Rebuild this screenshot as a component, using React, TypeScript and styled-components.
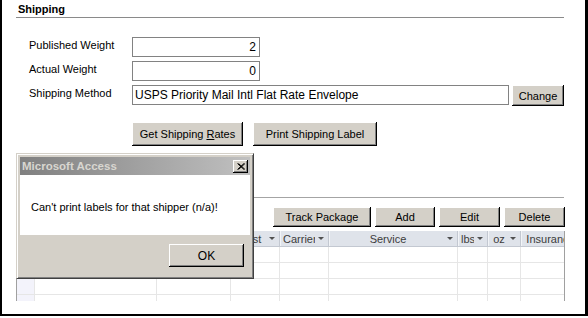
import React from 'react';
import styled, { createGlobalStyle } from 'styled-components';

const GlobalStyle = createGlobalStyle`
  html, body {
    margin: 0;
    padding: 0;
    background: #ffffff;
  }
  body {
    font-family: 'Liberation Sans', Arial, sans-serif;
    color: #000;
  }
`;

const Frame = styled.div`
  position: relative;
  width: 588px;
  height: 316px;
  box-sizing: border-box;
  border-left: 2px solid #000;
  border-right: 3px solid #000;
  border-bottom: 2px solid #000;
  background: #fff;
  overflow: hidden;
  padding-left: 14px;
  display: flex;
  flex-direction: column;
`;

const SectionHeader = styled.div`
  width: 548px;
  height: 18px;
  border-bottom: 1px solid #8a8a8a;
  padding: 3px 0 0 2px;
  box-sizing: border-box;
  font-size: 11px;
  font-weight: bold;
  line-height: 13px;
`;

const Fields = styled.div`
  margin-top: 19px;
  display: flex;
  flex-direction: column;
  gap: 4px;
`;

const FieldRow = styled.div`
  display: flex;
  align-items: flex-start;
`;

const Label = styled.div`
  width: 103px;
  margin-left: 13px;
  padding-top: 2px;
  font-size: 11px;
  line-height: 13px;
  color: #000;
`;

const TextBox = styled.div<{ $w: number; $right?: boolean }>`
  width: ${(p) => p.$w}px;
  height: 20px;
  box-sizing: border-box;
  border: 1px solid #828282;
  background: #fff;
  font-size: 12px;
  line-height: 18px;
  padding: 0 3px 0 2px;
  text-align: ${(p) => (p.$right ? 'right' : 'left')};
  white-space: nowrap;
  overflow: hidden;
`;

const Button = styled.div<{ $w: number; $h: number }>`
  width: ${(p) => p.$w}px;
  height: ${(p) => p.$h}px;
  box-sizing: border-box;
  background: #d4d0c8;
  box-shadow: inset -1px -1px #000, inset 1px 1px #fff, inset -2px -2px #808080;
  font-size: 11px;
  color: #000;
  display: flex;
  align-items: center;
  justify-content: center;
  white-space: nowrap;
  flex: none;
`;

const ChangeButton = styled(Button)`
  margin-left: 3px;
`;

const RateButtons = styled.div`
  margin: 16px 0 0 116px;
  display: flex;
  gap: 10px;
`;

const Divider = styled.div`
  margin-top: 51px;
  width: 548px;
  height: 1px;
  background: #a4a4a4;
`;

const ActionBar = styled.div`
  margin-top: 9px;
  width: 549px;
  display: flex;
  justify-content: flex-end;
  gap: 4px;
`;

const Sheet = styled.div`
  margin-top: 4px;
  width: 549px;
  height: 70px;
  box-sizing: border-box;
  border-left: 1px solid #a0a0a0;
  border-right: 1px solid #a0a0a0;
  overflow: hidden;
`;

const columns = '18px 122px 74px 49px 49px 129px 30px 33px 70px';

const SheetRow = styled.div<{ $head?: boolean }>`
  display: grid;
  grid-template-columns: ${columns};
  height: 16px;
  box-sizing: border-box;
  border-bottom: 1px solid ${(p) => (p.$head ? '#c3c8d1' : '#e6e6e6')};
  background: ${(p) => (p.$head ? '#dfe3ea' : '#fff')};
`;

const HeadCell = styled.div`
  display: flex;
  align-items: center;
  padding: 0 4px 0 3px;
  border-right: 1px solid #c3c8d1;
  box-shadow: inset 1px 0 #f2f4f7;
  overflow: hidden;
  min-width: 0;
`;

const HeadText = styled.span`
  flex: 1;
  min-width: 0;
  text-align: center;
  overflow: hidden;
  white-space: nowrap;
  font-size: 11px;
  color: #3c3c3c;
`;

const Arrow = styled.span`
  flex: none;
  margin-left: 3px;
  width: 0;
  height: 0;
  border-left: 3px solid transparent;
  border-right: 3px solid transparent;
  border-top: 3px solid #505050;
`;

const Cell = styled.div<{ $selector?: boolean }>`
  border-right: 1px solid #e6e6e6;
  background: ${(p) => (p.$selector ? '#f3f3fb' : '#fff')};
`;

const Dialog = styled.div`
  position: absolute;
  left: 14px;
  top: 153px;
  width: 238px;
  height: 126px;
  box-sizing: border-box;
  background: #d4d0c8;
  border: 1px solid;
  border-color: #d4d0c8 #404040 #404040 #d4d0c8;
  box-shadow: inset 1px 1px #fff, inset -1px -1px #808080;
  padding: 3px;
  display: flex;
  flex-direction: column;
`;

const TitleBar = styled.div`
  height: 18px;
  flex: none;
  background: linear-gradient(to right, #808080, #c0c0c0);
  display: flex;
  align-items: center;
  justify-content: space-between;
  padding: 0 2px 0 2px;
  box-sizing: border-box;
`;

const TitleText = styled.span`
  font-size: 11.5px;
  font-weight: bold;
  color: #d8d6d0;
`;

const CloseBox = styled.div`
  width: 15px;
  height: 13px;
  box-sizing: border-box;
  background: #d4d0c8;
  box-shadow: inset -1px -1px #000, inset 1px 1px #fff, inset -2px -2px #808080;
  display: flex;
  align-items: center;
  justify-content: center;
`;

const Message = styled.div`
  height: 60px;
  flex: none;
  background: #fff;
  box-sizing: border-box;
  padding: 26px 0 0 11px;
  font-size: 11px;
  line-height: 13px;
  color: #000;
`;

const DialogFooter = styled.div`
  flex: 1;
  display: flex;
  justify-content: flex-end;
  align-items: flex-start;
  padding: 9px 6px 0 0;
`;

const OkButton = styled(Button)`
  font-size: 12px;
`;

type Col = { label: string };

const headers: Col[] = [
  { label: 'Date' },
  { label: 'Tracking' },
  { label: 'Cost' },
  { label: 'Carrier' },
  { label: 'Service' },
  { label: 'lbs' },
  { label: 'oz' },
  { label: 'Insurance' },
];

function Datasheet() {
  const rows = [0, 1, 2, 3];
  return (
    <Sheet>
      <SheetRow $head>
        <HeadCell />
        {headers.map((h) => (
          <HeadCell key={h.label}>
            <HeadText>{h.label}</HeadText>
            <Arrow />
          </HeadCell>
        ))}
      </SheetRow>
      {rows.map((r) => (
        <SheetRow key={r}>
          <Cell $selector />
          {headers.map((h) => (
            <Cell key={h.label} />
          ))}
        </SheetRow>
      ))}
    </Sheet>
  );
}

function AccessMessage() {
  return (
    <Dialog>
      <TitleBar>
        <TitleText>Microsoft Access</TitleText>
        <CloseBox>
          <svg width="8" height="7" viewBox="0 0 8 7">
            <path d="M0.5 0.5 L7 6.5 M1.5 0.5 L8 6.5 M7 0.5 L0.5 6.5 M8 0.5 L1.5 6.5" stroke="#000" strokeWidth="1" />
          </svg>
        </CloseBox>
      </TitleBar>
      <Message>Can't print labels for that shipper (n/a)!</Message>
      <DialogFooter>
        <OkButton $w={75} $h={23}>OK</OkButton>
      </DialogFooter>
    </Dialog>
  );
}

export default function App() {
  return (
    <>
      <GlobalStyle />
      <Frame>
        <SectionHeader>Shipping</SectionHeader>
        <Fields>
          <FieldRow>
            <Label>Published Weight</Label>
            <TextBox $w={128} $right>2</TextBox>
          </FieldRow>
          <FieldRow>
            <Label>Actual Weight</Label>
            <TextBox $w={128} $right>0</TextBox>
          </FieldRow>
          <FieldRow>
            <Label>Shipping Method</Label>
            <TextBox $w={377}>USPS Priority Mail Intl Flat Rate Envelope</TextBox>
            <ChangeButton $w={52} $h={21}>Change</ChangeButton>
          </FieldRow>
        </Fields>
        <RateButtons>
          <Button $w={111} $h={24}>
            Get Shipping&nbsp;<u>R</u>ates
          </Button>
          <Button $w={124} $h={24}>Print Shipping Label</Button>
        </RateButtons>
        <Divider />
        <ActionBar>
          <Button $w={98} $h={20}>Track Package</Button>
          <Button $w={60} $h={20}>Add</Button>
          <Button $w={61} $h={20}>Edit</Button>
          <Button $w={61} $h={20}>Delete</Button>
        </ActionBar>
        <Datasheet />
        <AccessMessage />
      </Frame>
    </>
  );
}
